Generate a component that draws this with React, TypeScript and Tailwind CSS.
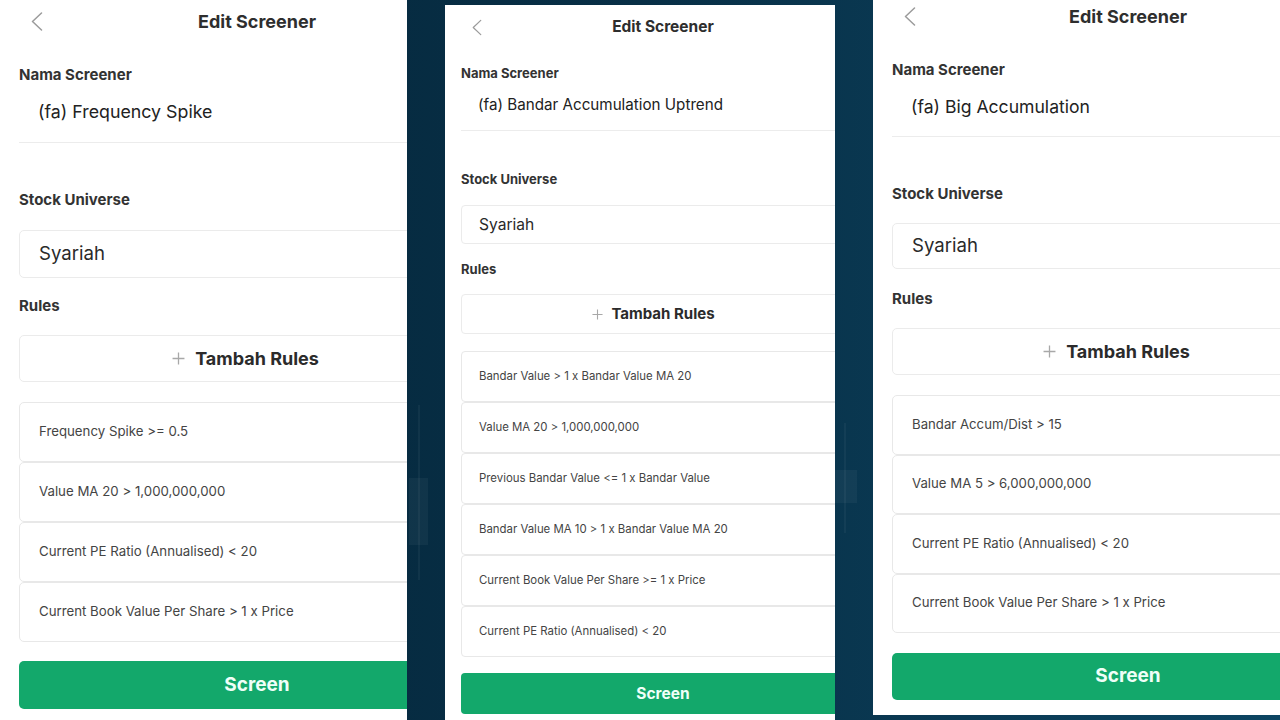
import React from 'react';

type Look = {
  frame: string;
  inner: string;
  header: string;
  chevron: string;
  chevronPad: string;
  title: string;
  label1: string;
  value: string;
  divider: string;
  label2: string;
  select: string;
  label3: string;
  add: string;
  plus: number;
  plusGap: string;
  rows: string;
  row: string;
  screen: string;
};

const font = { fontFamily: 'Inter, "Noto Sans", sans-serif' };

const bigLeft: Look = {
  frame: 'w-[407px] h-[720px] shrink-0 overflow-hidden bg-white',
  inner: 'w-[514px] px-[19px]',
  header: 'grid grid-cols-[1fr_auto_1fr] items-center h-[42px]',
  chevron: 'w-[12px] h-[19px]',
  chevronPad: 'pl-[12px]',
  title: 'text-[18px] font-bold text-[#2e2e2e]',
  label1: 'mt-[23px] text-[15px] leading-[20px] font-bold text-[#333]',
  value: 'mt-[15px] pl-[19px] text-[17.8px] leading-[24px] text-[#222]',
  divider: 'mt-[18px] h-px bg-[#ececec]',
  label2: 'mt-[47px] text-[15px] leading-[20px] font-bold text-[#333]',
  select: 'mt-[20px] h-[48px] flex items-center pl-[19px] rounded-[5px] border border-[#ebebeb] text-[18.6px] text-[#2a2a2a]',
  label3: 'mt-[18px] text-[15px] leading-[20px] font-bold text-[#333]',
  add: 'mt-[19px] h-[47px] flex items-center justify-center rounded-[5px] border border-[#ebebeb] text-[18px] font-bold text-[#2b2b2b]',
  plus: 13,
  plusGap: 'w-[10px]',
  rows: 'mt-[20px] flex flex-col',
  row: 'h-[60px] flex items-center pl-[19px] rounded-[5px] border border-[#e8e8e8] text-[13.25px] text-[#444]',
  screen: 'mt-[19px] h-[48px] flex items-center justify-center rounded-[5px] bg-[#13a86b] text-[19px] font-bold text-[#effff8]',
};

const bigRight: Look = {
  ...bigLeft,
  frame: 'w-[407px] h-[715px] shrink-0 overflow-hidden bg-white',
  inner: 'w-[510px] px-[19px]',
  header: 'grid grid-cols-[1fr_auto_1fr] items-center h-[32px]',
  label1: 'mt-[28px] text-[15px] leading-[20px] font-bold text-[#333]',
  value: 'mt-[15px] pl-[19px] text-[17.6px] leading-[24px] text-[#222]',
  divider: 'mt-[17px] h-px bg-[#ececec]',
  label2: 'mt-[47px] text-[15px] leading-[20px] font-bold text-[#333]',
  select: 'mt-[19px] h-[46px] flex items-center pl-[19px] rounded-[5px] border border-[#ebebeb] text-[18.6px] text-[#2a2a2a]',
  label3: 'mt-[20px] text-[15px] leading-[20px] font-bold text-[#333]',
  add: 'mt-[19px] h-[47px] flex items-center justify-center rounded-[5px] border border-[#ebebeb] text-[18px] font-bold text-[#2b2b2b]',
  rows: 'mt-[20px] flex flex-col',
  row: 'h-[59.5px] flex items-center pl-[19px] rounded-[5px] border border-[#e8e8e8] text-[13.2px] text-[#444]',
  screen: 'mt-[20px] h-[47px] flex items-center justify-center rounded-[5px] bg-[#13a86b] text-[19px] font-bold text-[#effff8]',
};

const small: Look = {
  frame: 'w-[390px] h-[715px] mt-[5px] shrink-0 overflow-hidden bg-white',
  inner: 'w-[436px] px-[16px]',
  header: 'grid grid-cols-[1fr_auto_1fr] items-center h-[44px]',
  chevron: 'w-[10px] h-[17px]',
  chevronPad: 'pl-[11px]',
  title: 'text-[15.5px] font-bold text-[#2e2e2e]',
  label1: 'mt-[15px] text-[13px] leading-[18px] font-bold text-[#333]',
  value: 'mt-[12px] pl-[17px] text-[15.2px] leading-[22px] text-[#222]',
  divider: 'mt-[14px] h-px bg-[#ececec]',
  label2: 'mt-[39px] text-[13px] leading-[18px] font-bold text-[#333]',
  select: 'mt-[17px] h-[39px] flex items-center pl-[17px] rounded-[4px] border border-[#ebebeb] text-[15.6px] text-[#2a2a2a]',
  label3: 'mt-[16px] text-[13px] leading-[18px] font-bold text-[#333]',
  add: 'mt-[16px] h-[40px] flex items-center justify-center rounded-[4px] border border-[#ebebeb] text-[15px] font-bold text-[#2b2b2b]',
  plus: 11,
  plusGap: 'w-[8px]',
  rows: 'mt-[17px] flex flex-col',
  row: 'h-[51px] flex items-center pl-[17px] rounded-[4px] border border-[#e8e8e8] text-[11.4px] text-[#444]',
  screen: 'mt-[16px] h-[41px] flex items-center justify-center rounded-[4px] bg-[#13a86b] text-[15.5px] font-bold text-[#effff8]',
};

const screens = [
  {
    look: bigLeft,
    name: '(fa) Frequency Spike',
    rules: [
      'Frequency Spike >= 0.5',
      'Value MA 20 > 1,000,000,000',
      'Current PE Ratio (Annualised) < 20',
      'Current Book Value Per Share > 1 x Price',
    ],
  },
  {
    look: small,
    name: '(fa) Bandar Accumulation Uptrend',
    rules: [
      'Bandar Value > 1 x Bandar Value MA 20',
      'Value MA 20 > 1,000,000,000',
      'Previous Bandar Value <= 1 x Bandar Value',
      'Bandar Value MA 10 > 1 x Bandar Value MA 20',
      'Current Book Value Per Share >= 1 x Price',
      'Current PE Ratio (Annualised) < 20',
    ],
  },
  {
    look: bigRight,
    name: '(fa) Big Accumulation',
    rules: [
      'Bandar Accum/Dist > 15',
      'Value MA 5 > 6,000,000,000',
      'Current PE Ratio (Annualised) < 20',
      'Current Book Value Per Share > 1 x Price',
    ],
  },
];

const Back = ({ className }: { className: string }) => (
  <svg viewBox="0 0 12 19" className={className} fill="none">
    <polyline points="10.5,1 1.5,9.5 10.5,18" stroke="#9b9b9b" strokeWidth="1.5" strokeLinecap="round" strokeLinejoin="round" />
  </svg>
);

const Plus = ({ size }: { size: number }) => (
  <svg width={size} height={size} viewBox="0 0 12 12" className="shrink-0">
    <path d="M6 0.5v11M0.5 6h11" stroke="#a8a8a8" strokeWidth="1.2" />
  </svg>
);

const Phone = ({ look, name, rules }: { look: Look; name: string; rules: string[] }) => (
  <div className={look.frame}>
    <div className={look.inner}>
      <div className={look.header}>
        <div className={look.chevronPad}>
          <Back className={look.chevron} />
        </div>
        <div className={look.title}>Edit Screener</div>
        <div />
      </div>

      <div className={look.label1}>Nama Screener</div>
      <div className={look.value}>{name}</div>
      <div className={look.divider} />

      <div className={look.label2}>Stock Universe</div>
      <div className={look.select}>Syariah</div>

      <div className={look.label3}>Rules</div>
      {/* text stays centred, the plus hangs to its left */}
      <div className={look.add}>
        <Plus size={look.plus} />
        <span className={look.plusGap} />
        <span>Tambah Rules</span>
        <span className={look.plusGap} />
        <span style={{ width: look.plus }} />
      </div>

      <div className={look.rows}>
        {rules.map((r) => (
          <div key={r} className={look.row}>
            {r}
          </div>
        ))}
      </div>

      <div className={look.screen}>Screen</div>
    </div>
  </div>
);

// faint candle drawn into the dark strips between the phones
const Candle = ({ x, top, wick, bodyX, bodyW, bodyTop, body }: { x: number; top: number; wick: number; bodyX: number; bodyW: number; bodyTop: number; body: number }) => (
  <svg width="38" height="720" viewBox="0 0 38 720" className="block">
    <line x1={x} x2={x} y1={top} y2={top + wick} stroke="#ffffff" strokeOpacity="0.045" strokeWidth="2" />
    <rect x={bodyX} y={bodyTop} width={bodyW} height={body} fill="#ffffff" fillOpacity="0.045" />
  </svg>
);

export default function App() {
  return (
    <div style={font} className="w-[1280px] h-[720px] flex overflow-hidden bg-linear-to-r from-[#04263a] via-[#082f46] to-[#0c4562]">
      <Phone {...screens[0]} />
      <div className="w-[38px] shrink-0">
        <Candle x={12} top={405} wick={175} bodyX={2} bodyW={19} bodyTop={478} body={67} />
      </div>
      <Phone {...screens[1]} />
      <div className="w-[38px] shrink-0">
        <Candle x={10} top={423} wick={110} bodyX={0} bodyW={22} bodyTop={470} body={33} />
      </div>
      <Phone {...screens[2]} />
    </div>
  );
}
